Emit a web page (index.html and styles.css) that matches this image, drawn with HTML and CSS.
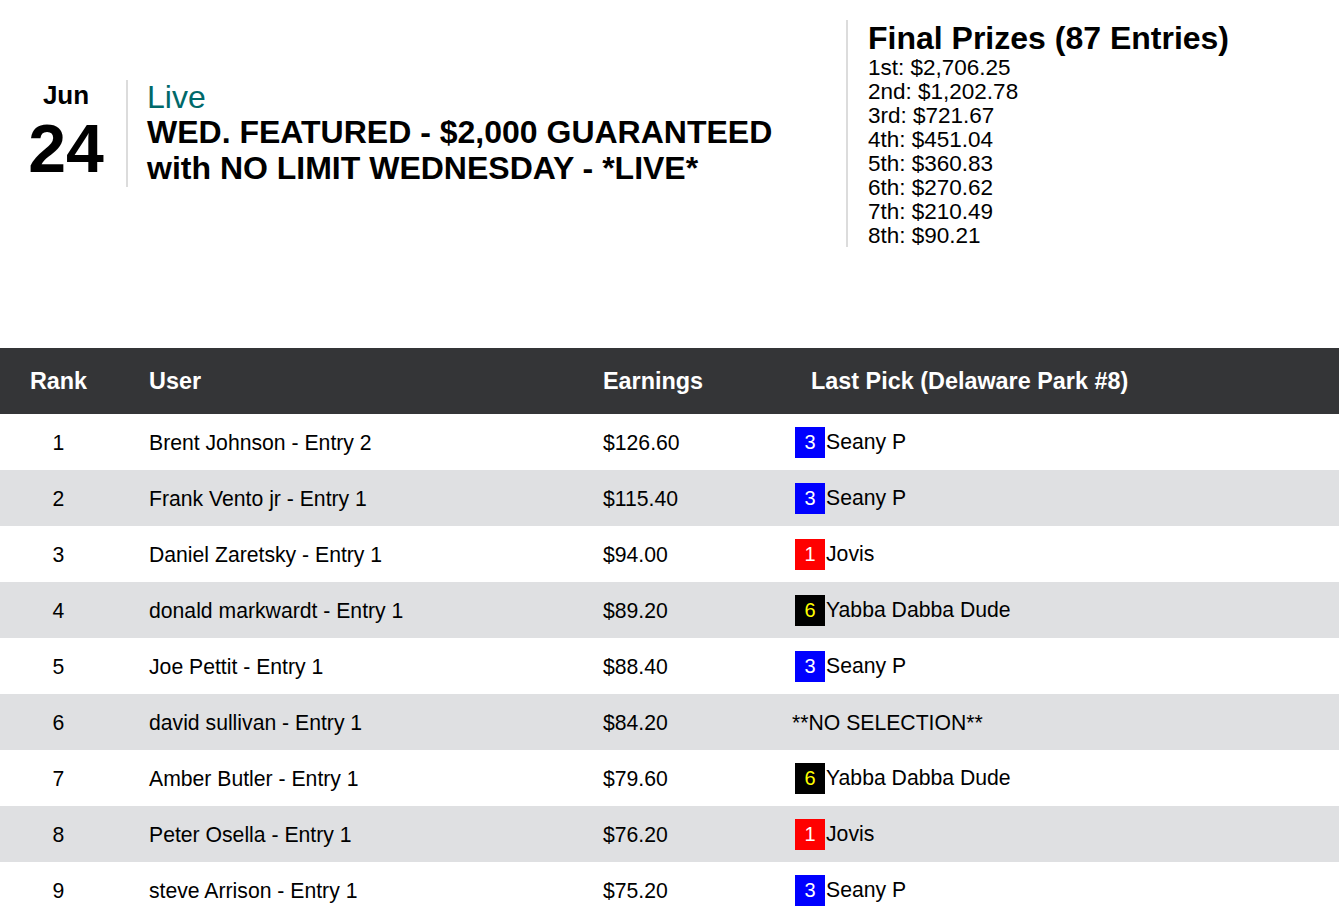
FILE: index.html
```html
<!DOCTYPE html>
<html lang="en">
<head>
<meta charset="utf-8">
<title>Leaderboard</title>
<link rel="stylesheet" href="styles.css">
</head>
<body>
<div class="top">
  <div class="event">
    <div class="date">
      <div class="month">Jun</div>
      <div class="day">24</div>
    </div>
    <div class="info">
      <div class="status">Live</div>
      <div class="title">WED. FEATURED - $2,000 GUARANTEED<br>with NO LIMIT WEDNESDAY - *LIVE*</div>
    </div>
  </div>
  <div class="prizes">
    <div class="prizes-title">Final Prizes (87 Entries)</div>
    <div class="prize">1st: $2,706.25</div>
    <div class="prize">2nd: $1,202.78</div>
    <div class="prize">3rd: $721.67</div>
    <div class="prize">4th: $451.04</div>
    <div class="prize">5th: $360.83</div>
    <div class="prize">6th: $270.62</div>
    <div class="prize">7th: $210.49</div>
    <div class="prize">8th: $90.21</div>
  </div>
</div>
<table class="board">
  <colgroup>
    <col class="w-rank">
    <col class="w-user">
    <col class="w-earn">
    <col>
  </colgroup>
  <thead>
    <tr>
      <th class="c-rank">Rank</th>
      <th class="c-user">User</th>
      <th class="c-earn">Earnings</th>
      <th class="c-pick">Last Pick (Delaware Park #8)</th>
    </tr>
  </thead>
  <tbody>
    <tr><td class="c-rank">1</td><td class="c-user">Brent Johnson - Entry 2</td><td class="c-earn">$126.60</td><td class="c-pick"><span class="badge b3">3</span>Seany P</td></tr>
    <tr><td class="c-rank">2</td><td class="c-user">Frank Vento jr - Entry 1</td><td class="c-earn">$115.40</td><td class="c-pick"><span class="badge b3">3</span>Seany P</td></tr>
    <tr><td class="c-rank">3</td><td class="c-user">Daniel Zaretsky - Entry 1</td><td class="c-earn">$94.00</td><td class="c-pick"><span class="badge b1">1</span>Jovis</td></tr>
    <tr><td class="c-rank">4</td><td class="c-user">donald markwardt - Entry 1</td><td class="c-earn">$89.20</td><td class="c-pick"><span class="badge b6">6</span>Yabba Dabba Dude</td></tr>
    <tr><td class="c-rank">5</td><td class="c-user">Joe Pettit - Entry 1</td><td class="c-earn">$88.40</td><td class="c-pick"><span class="badge b3">3</span>Seany P</td></tr>
    <tr><td class="c-rank">6</td><td class="c-user">david sullivan - Entry 1</td><td class="c-earn">$84.20</td><td class="c-pick">**NO SELECTION**</td></tr>
    <tr><td class="c-rank">7</td><td class="c-user">Amber Butler - Entry 1</td><td class="c-earn">$79.60</td><td class="c-pick"><span class="badge b6">6</span>Yabba Dabba Dude</td></tr>
    <tr><td class="c-rank">8</td><td class="c-user">Peter Osella - Entry 1</td><td class="c-earn">$76.20</td><td class="c-pick"><span class="badge b1">1</span>Jovis</td></tr>
    <tr><td class="c-rank">9</td><td class="c-user">steve Arrison - Entry 1</td><td class="c-earn">$75.20</td><td class="c-pick"><span class="badge b3">3</span>Seany P</td></tr>
  </tbody>
</table>
</body>
</html>
```
FILE: styles.css
```css
html, body {
  margin: 0;
  padding: 0;
  background: #ffffff;
  color: #000000;
  font-family: "Liberation Sans", Arial, sans-serif;
}

.top {
  display: flex;
  align-items: flex-start;
  height: 348px;
}

.event {
  flex: 0 0 846px;
  display: flex;
  align-items: flex-start;
  margin-top: 80px;
}

.date {
  box-sizing: border-box;
  width: 128px;
  height: 107px;
  padding-left: 28px;
  padding-right: 22px;
  border-right: 2px solid #dcdcdc;
}

.month,
.day {
  text-align: center;
  font-weight: bold;
}

.month {
  font-size: 26px;
  line-height: 30px;
}

.day {
  font-size: 68px;
  line-height: 77px;
}

.info {
  padding-left: 19px;
}

.status {
  color: #00696a;
  font-size: 32px;
  line-height: 34px;
}

.title {
  font-size: 32px;
  font-weight: bold;
  line-height: 36px;
}

.prizes {
  box-sizing: border-box;
  margin-top: 20px;
  height: 227px;
  padding-left: 20px;
  border-left: 2px solid #dcdcdc;
}

.prizes-title {
  font-size: 32px;
  font-weight: bold;
  line-height: 36px;
}

.prize {
  font-size: 22.5px;
  line-height: 24px;
}

.board {
  width: 100%;
  border-collapse: collapse;
  table-layout: fixed;
}

.w-rank { width: 117px; }
.w-user { width: 454px; }
.w-earn { width: 189px; }

.board th {
  height: 66px;
  padding: 0;
  background: #343537;
  color: #ffffff;
  font-size: 23.4px;
  font-weight: bold;
  text-align: left;
}

.board td {
  height: 56px;
  padding: 2px 0 0 0;
  box-sizing: border-box;
  font-size: 21.2px;
}

.board tbody tr:nth-child(even) td {
  background: #dfe0e2;
}

.board .c-rank { text-align: center; }
.board .c-user,
.board .c-earn,
.board td.c-pick { padding-left: 32px; }
.board th.c-pick { padding-left: 51px; }

.badge {
  display: inline-block;
  width: 30px;
  height: 31px;
  margin-left: 3px;
  margin-right: 1px;
  font-size: 20px;
  line-height: 31px;
  text-align: center;
  vertical-align: middle;
  position: relative;
  top: -1px;
}

.b1 { background: #ff0000; color: #ffffff; }
.b3 { background: #0000ff; color: #ffffff; }
.b6 { background: #000000; color: #ffff00; }
```
